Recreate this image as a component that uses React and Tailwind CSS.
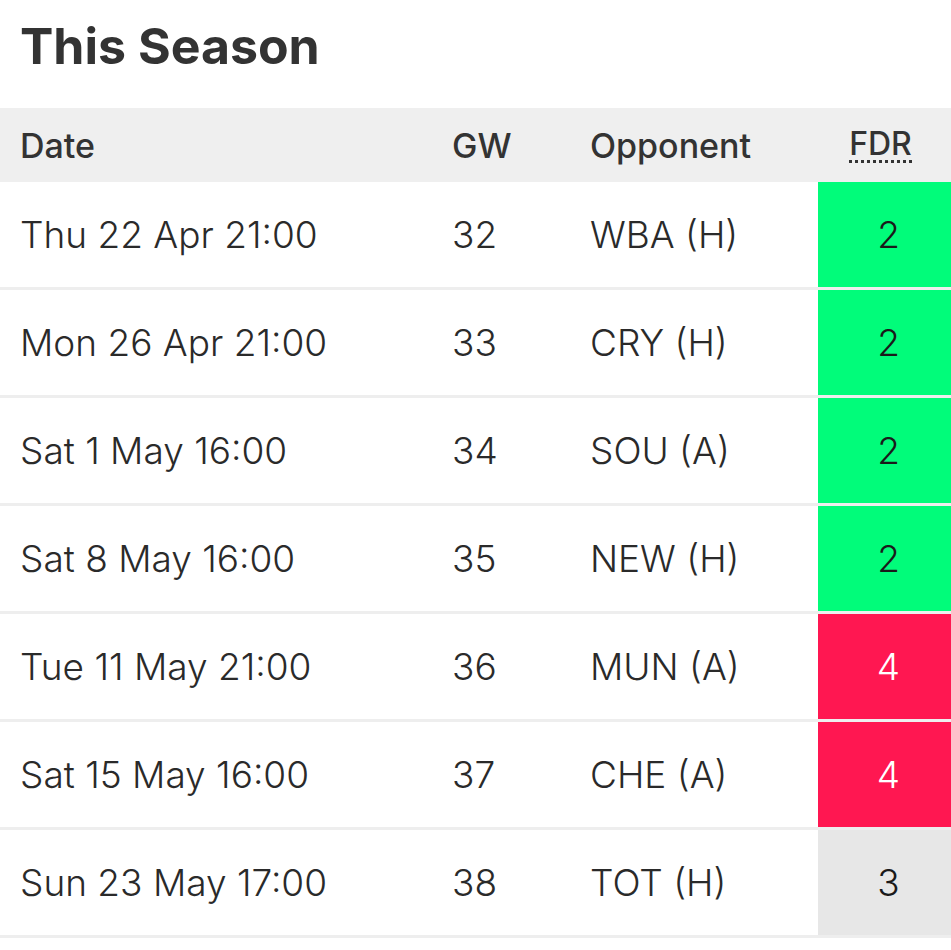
import React from "react";

const fixtures = [
  { date: "Thu 22 Apr 21:00", gw: 32, opp: "WBA (H)", fdr: 2 },
  { date: "Mon 26 Apr 21:00", gw: 33, opp: "CRY (H)", fdr: 2 },
  { date: "Sat 1 May 16:00", gw: 34, opp: "SOU (A)", fdr: 2 },
  { date: "Sat 8 May 16:00", gw: 35, opp: "NEW (H)", fdr: 2 },
  { date: "Tue 11 May 21:00", gw: 36, opp: "MUN (A)", fdr: 4 },
  { date: "Sat 15 May 16:00", gw: 37, opp: "CHE (A)", fdr: 4 },
  { date: "Sun 23 May 17:00", gw: 38, opp: "TOT (H)", fdr: 3 },
];

const fdrStyles = {
  2: "bg-[#01fc7a] text-[#1a1a1a]",
  3: "bg-[#e7e7e7] text-[#1a1a1a]",
  4: "bg-[#ff1751] text-white",
};

export default function App() {
  return (
    <div
      className="min-h-screen w-[951px] bg-white text-[#2f2f2f]"
      style={{ fontFamily: "Inter, 'Noto Sans', sans-serif" }}
    >
      {/* Title */}
      <div className="h-[108px] px-5 flex items-center">
        <h2 className="text-[50px] font-bold text-[#333] -mt-4">This Season</h2>
      </div>

      {/* Table header */}
      <div className="grid grid-cols-[452px_138px_228px_133px] h-[74px] items-center bg-[#efefef] text-[34px] font-medium text-[#333]">
        <div className="pl-5">Date</div>
        <div>GW</div>
        <div>Opponent</div>
        <div className="flex justify-center pr-2">
          <span className="border-b-[3px] border-dotted border-[#333] leading-[1.05] text-[32px]">FDR</span>
        </div>
      </div>

      {/* Rows */}
      {fixtures.map((f) => (
        <div
          key={f.gw}
          className="grid grid-cols-[452px_138px_228px_133px] h-[108px] border-b-[3px] border-[#eeeeee] text-[37px] font-light text-[#2a2a2a]"
        >
          <div className="pl-5 flex items-center">{f.date}</div>
          <div className="flex items-center">{f.gw}</div>
          <div className="flex items-center">{f.opp}</div>
          <div className={`flex items-center justify-center pl-2 ${fdrStyles[f.fdr]}`}>
            {f.fdr}
          </div>
        </div>
      ))}
    </div>
  );
}
